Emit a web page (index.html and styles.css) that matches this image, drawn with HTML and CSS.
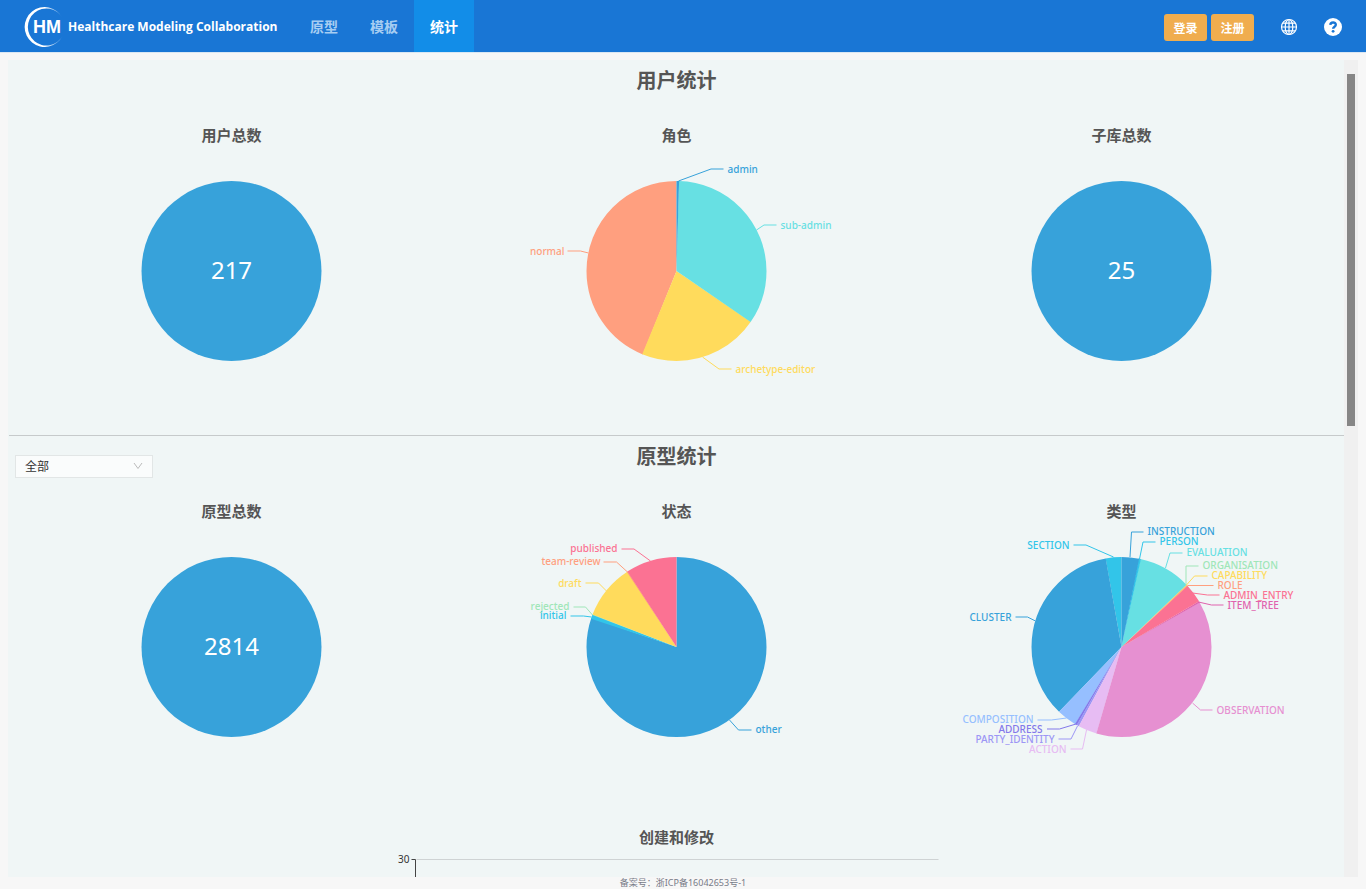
FILE: index.html
```html
<!DOCTYPE html>
<html lang="zh-CN">
<head>
<meta charset="utf-8">
<title>Healthcare Modeling Collaboration</title>
<link rel="stylesheet" href="styles.css">
</head>
<body>
<header class="topbar">
  <a class="brand" href="#">
    <svg class="brand-mark" viewBox="0 0 44 44" aria-hidden="true">
      <defs>
        <linearGradient id="fade" x1="0" y1="0" x2="1" y2="0"><stop offset="0.55" stop-color="#fff"/><stop offset="1" stop-color="#fff" stop-opacity=".25"/></linearGradient>
      </defs>
      <path fill="url(#fade)" d="M38.500 13A20 20 0 1 0 38.500 31A18.500 18.500 0 1 1 38.500 13Z"/>
      <text class="brand-initials" x="9" y="28">HM</text>
    </svg>
    <span class="brand-name">Healthcare Modeling Collaboration</span>
  </a>
  <nav class="nav">
    <a href="#">原型</a>
    <a href="#">模板</a>
    <a class="active" href="#" aria-current="page">统计</a>
  </nav>
  <div class="actions">
    <button class="btn" type="button">登录</button>
    <button class="btn" type="button">注册</button>
    <button class="icon-btn" type="button" aria-label="语言">
      <svg viewBox="0 0 18 18" fill="none" stroke="#fff" stroke-width="1.2"><circle cx="9" cy="9" r="7.500"/><ellipse cx="9" cy="9" rx="3.800" ry="7.500"/><path d="M9 1.500v15M1.500 9h15M2.600 5.200h12.800M2.600 12.800h12.800"/></svg>
    </button>
    <button class="icon-btn" type="button" aria-label="帮助">
      <svg viewBox="0 0 18 18"><circle cx="9" cy="9" r="9" fill="#fff"/><path d="M6.300 6.900C6.500 3.700 11.800 3.700 11.800 6.800C11.800 8.700 9.100 8.700 9.100 10.800" fill="none" stroke="#1976d5" stroke-width="2.400"/><circle cx="9.100" cy="13.300" r="1.400" fill="#1976d5"/></svg>
    </button>
  </div>
</header>

<div class="frame">
  <main class="content">
    <section class="stats divided">
      <div class="section-head"><h2>用户统计</h2></div>
      <div class="charts">
        <article class="chart">
          <h3>用户总数</h3>
          <svg class="pie" viewBox="-220 -121 440 284"><circle class="disc" r="90"/><text class="total" y="8">217</text></svg>
        </article>
        <article class="chart">
          <h3>角色</h3>
          <svg class="pie" viewBox="-220 -121 440 284">
            <g class="slices">
              <circle class="c6" r="45" pathLength="360" stroke-dasharray="158 360" stroke-dashoffset="-202"/>
              <circle class="c5" r="45" pathLength="360" stroke-dasharray="78 360" stroke-dashoffset="-124.400"/>
              <circle class="c3" r="45" pathLength="360" stroke-dasharray="123 360" stroke-dashoffset="-1.600"/>
              <circle class="c1" r="45" pathLength="360" stroke-dasharray="1.700 360"/>
            </g>
            <g class="labels">
              <g class="c1"><path d="M2 -90L34.500 -102H47"/><text x="51" y="-98">admin</text></g>
              <g class="c3"><path d="M80 -41L87.500 -46H100"/><text x="104" y="-42">sub-admin</text></g>
              <g class="c5"><path d="M26 86L42.500 98H55"/><text x="59" y="102">archetype-editor</text></g>
              <g class="c6 left"><path d="M-88 -18L-96 -20H-109"/><text x="-112" y="-16">normal</text></g>
            </g>
          </svg>
        </article>
        <article class="chart">
          <h3>子库总数</h3>
          <svg class="pie" viewBox="-220 -121 440 284"><circle class="disc" r="90"/><text class="total" y="8">25</text></svg>
        </article>
      </div>
    </section>

    <section class="stats">
      <div class="section-head">
        <label class="picker">
          <select aria-label="子库"><option>全部</option></select>
          <svg viewBox="0 0 10 10" aria-hidden="true"><path d="M1 2L5 7.500L9 2"/></svg>
        </label>
        <h2>原型统计</h2>
      </div>
      <div class="charts">
        <article class="chart">
          <h3>原型总数</h3>
          <svg class="pie" viewBox="-220 -121 440 284"><circle class="disc" r="90"/><text class="total" y="8">2814</text></svg>
        </article>
        <article class="chart">
          <h3>状态</h3>
          <svg class="pie" viewBox="-220 -121 440 284">
            <g class="slices">
              <circle class="c1" r="45" pathLength="360" stroke-dasharray="289 360"/>
              <circle class="c2" r="45" pathLength="360" stroke-dasharray="2.800 360" stroke-dashoffset="-288.300"/>
              <circle class="c4" r="45" pathLength="360" stroke-dasharray=".4 360" stroke-dashoffset="-290.900"/>
              <circle class="c5" r="45" pathLength="360" stroke-dasharray="36 360" stroke-dashoffset="-291.100"/>
              <circle class="c6" r="45" pathLength="360" stroke-dasharray=".6 360" stroke-dashoffset="-326.500"/>
              <circle class="c7" r="45" pathLength="360" stroke-dasharray="33.100 360" stroke-dashoffset="-326.900"/>
            </g>
            <g class="labels">
              <g class="c1"><path d="M53 73L62 83H75"/><text x="79" y="86">other</text></g>
              <g class="c7 left"><path d="M-26 -86L-42.500 -98H-55"/><text x="-59" y="-95">published</text></g>
              <g class="c6 left"><path d="M-49 -75L-60 -85H-73"/><text x="-76" y="-82">team-review</text></g>
              <g class="c5 left"><path d="M-70 -56L-78 -64H-91"/><text x="-95" y="-60">draft</text></g>
              <g class="c4 left"><path d="M-84 -32L-91 -40H-103"/><text x="-107" y="-37">rejected</text></g>
              <g class="c2 left"><path d="M-85 -30L-93 -31H-106"/><text x="-110" y="-28">initial</text></g>
            </g>
          </svg>
        </article>
        <article class="chart">
          <h3>类型</h3>
          <svg class="pie" viewBox="-220 -121 440 284">
            <g class="slices">
              <circle class="c2" r="45" pathLength="360" stroke-dasharray="10.200 360" stroke-dashoffset="-349.800"/>
              <circle class="c1" r="45" pathLength="360" stroke-dasharray="126 360" stroke-dashoffset="-223.900"/>
              <circle class="c13" r="45" pathLength="360" stroke-dasharray="13 360" stroke-dashoffset="-211"/>
              <circle class="c12" r="45" pathLength="360" stroke-dasharray="1.300 360" stroke-dashoffset="-209.800"/>
              <circle class="c11" r="45" pathLength="360" stroke-dasharray="1.600 360" stroke-dashoffset="-208.300"/>
              <circle class="c10" r="45" pathLength="360" stroke-dasharray="12.200 360" stroke-dashoffset="-196.200"/>
              <circle class="c9" r="45" pathLength="360" stroke-dasharray="136.200 360" stroke-dashoffset="-60.100"/>
              <circle class="c8" r="45" pathLength="360" stroke-dasharray="1 360" stroke-dashoffset="-59.400"/>
              <circle class="c7" r="45" pathLength="360" stroke-dasharray="12.400 360" stroke-dashoffset="-47.100"/>
              <circle class="c6" r="45" pathLength="360" stroke-dasharray=".9 360" stroke-dashoffset="-46.500"/>
              <circle class="c5" r="45" pathLength="360" stroke-dasharray=".5 360" stroke-dashoffset="-46.100"/>
              <circle class="c3" r="45" pathLength="360" stroke-dasharray="34 360" stroke-dashoffset="-12.200"/>
              <circle class="c2" r="45" pathLength="360" stroke-dasharray="1.600 360" stroke-dashoffset="-10.900"/>
              <circle class="c1" r="45" pathLength="360" stroke-dasharray="11.300 360"/>
            </g>
            <g class="labels">
              <g class="c1"><path d="M8.500 -90L10 -115H22"/><text x="26" y="-112">INSTRUCTION</text></g>
              <g class="c2"><path d="M18 -88L21.500 -105H34"/><text x="38" y="-102">PERSON</text></g>
              <g class="c3"><path d="M44 -79L48.500 -94H61"/><text x="65" y="-91">EVALUATION</text></g>
              <g class="c4"><path d="M64.500 -62V-81H77"/><text x="81" y="-78">ORGANISATION</text></g>
              <g class="c5"><path d="M65 -62L73 -71H86"/><text x="90" y="-68">CAPABILITY</text></g>
              <g class="c6"><path d="M66 -61.500H92"/><text x="96" y="-58">ROLE</text></g>
              <g class="c7"><path d="M71 -54L86 -52H98"/><text x="102" y="-48">ADMIN_ENTRY</text></g>
              <g class="c8"><path d="M77 -45L90 -42H102"/><text x="106" y="-38">ITEM_TREE</text></g>
              <g class="c9"><path d="M71 56L79 63H91"/><text x="95" y="67">OBSERVATION</text></g>
              <g class="c10 left"><path d="M-35 83L-39 102H-51"/><text x="-55" y="106">ACTION</text></g>
              <g class="c11 left"><path d="M-44 79L-50.500 92H-63"/><text x="-67" y="96">PARTY_IDENTITY</text></g>
              <g class="c12 left"><path d="M-45.500 77L-62 82H-74.500"/><text x="-79" y="86">ADDRESS</text></g>
              <g class="c13 left"><path d="M-55 71L-70 73H-84"/><text x="-88" y="76">COMPOSITION</text></g>
              <g class="c1 left"><path d="M-86 -26L-94 -30H-106"/><text x="-110" y="-26">CLUSTER</text></g>
              <g class="c2 left"><path d="M-8 -90L-35.500 -102H-48"/><text x="-52" y="-98">SECTION</text></g>
            </g>
          </svg>
        </article>
      </div>
    </section>

    <section class="history">
      <h3>创建和修改</h3>
      <svg class="timeline" viewBox="-300 0 600 200">
        <path class="grid" d="M-260 7.500H262"/>
        <path class="axis" d="M-265 7.500H-261V200"/>
        <text x="-267" y="11">30</text>
      </svg>
    </section>
  </main>
  <div class="scroll-track" aria-hidden="true"><div class="scroll-thumb"></div></div>
</div>
<footer class="footer">备案号：浙ICP备16042653号-1</footer>
</body>
</html>
```
FILE: styles.css
```css
* { box-sizing: border-box; }

body {
  margin: 0;
  height: 100vh;
  display: flex;
  flex-direction: column;
  overflow: hidden;
  background: #f7f7f7;
  color: #555;
  font-family: "Noto Sans", "Noto Sans CJK SC", sans-serif;
}

h2, h3 { margin: 0; text-align: center; }
h2 { font-size: 20px; line-height: 42px; }
h3 { font-size: 15px; line-height: 30px; }

/* Top bar */
.topbar {
  flex: none;
  display: flex;
  height: 52px;
  padding: 0 24px;
  background: #1976d5;
  box-shadow: 0 1px 0 #dbe7f3;
}

.brand { display: flex; align-items: center; width: 270px; color: #fff; text-decoration: none; }
.brand-mark { width: 44px; height: 44px; margin-top: 2px; }
.brand-initials { fill: #fff; font: bold 18px "Liberation Sans", sans-serif; }
.brand-name { font: bold 12px "Open Sans", sans-serif; white-space: nowrap; }

.nav { display: flex; }
.nav a {
  padding: 0 16px;
  color: #a6cdf2;
  font-size: 14px;
  font-weight: bold;
  line-height: 54px;
  text-decoration: none;
}
.nav .active { background: #128de8; color: #fff; }

.actions { display: flex; align-items: center; gap: 4px; margin-left: auto; padding-top: 2px; }
.btn {
  width: 43px;
  height: 27px;
  padding: 1px 0 0;
  border: 0;
  border-radius: 3px;
  background: #f0ad4e;
  color: #fff;
  font: bold 12px "Noto Sans", "Noto Sans CJK SC", sans-serif;
}
.icon-btn { display: flex; margin-left: 22px; padding: 0; border: 0; background: none; }
.icon-btn svg { width: 18px; height: 18px; }

/* Scrolling panel */
.frame { flex: 1; min-height: 0; display: flex; margin: 8px 8px 0; background: #f0f6f6; }
.content { flex: 1; min-width: 0; padding-left: 1px; overflow: hidden; }
.scroll-track { width: 14px; padding: 14px 3px; background: #f0f0f0; }
.scroll-thumb { height: 352px; background: #868686; }

.divided { padding-bottom: 1px; border-bottom: 1px solid #c6cacb; }
.section-head { display: grid; grid-template-columns: repeat(3, 1fr); height: 40px; }
.section-head h2 { grid-column: 2; grid-row: 1; }
.charts { display: grid; grid-template-columns: repeat(3, 1fr); padding-top: 20px; }

.picker { position: relative; width: 138px; height: 23px; margin: 19px 0 0 6px; }
.picker select {
  display: block;
  width: 100%;
  height: 23px;
  padding: 0 9px;
  appearance: none;
  border: 1px solid #e2e6e6;
  border-radius: 0;
  background: #fafcfc;
  color: #333;
  font: 12px "Noto Sans", "Noto Sans CJK SC", sans-serif;
}
.picker svg { position: absolute; top: 6px; right: 10px; width: 10px; height: 10px; fill: none; stroke: #bbb; }

/* Charts */
.pie { display: block; width: 100%; height: 284px; overflow: visible; }
.disc { fill: #37a2da; }
.total { fill: #fff; font-size: 24px; text-anchor: middle; }
.slices { transform: rotate(-90deg); fill: none; stroke-width: 90px; }
.slices circle { stroke: currentColor; }
.labels { font-size: 10px; font-weight: 500; }
.labels path { fill: none; stroke: currentColor; }
.labels text { fill: currentColor; }
.left { text-anchor: end; }

.c1 { color: #37a2da; }
.c2 { color: #32c5e9; }
.c3 { color: #67e0e3; }
.c4 { color: #9fe6b8; }
.c5 { color: #ffdb5c; }
.c6 { color: #ff9f7f; }
.c7 { color: #fb7293; }
.c8 { color: #e062ae; }
.c9 { color: #e690d1; }
.c10 { color: #e7bcf3; }
.c11 { color: #9d96f5; }
.c12 { color: #8378ea; }
.c13 { color: #96bfff; }

.history { padding-top: 12px; }
.timeline { display: block; width: 100%; height: 200px; }
.timeline path { fill: none; }
.timeline .grid { stroke: #cfd3d4; }
.timeline .axis { stroke: #444; }
.timeline text { fill: #333; font-size: 10px; text-anchor: end; }

.footer { flex: none; height: 12px; color: #777b88; font-size: 9px; line-height: 12px; text-align: center; }
```
